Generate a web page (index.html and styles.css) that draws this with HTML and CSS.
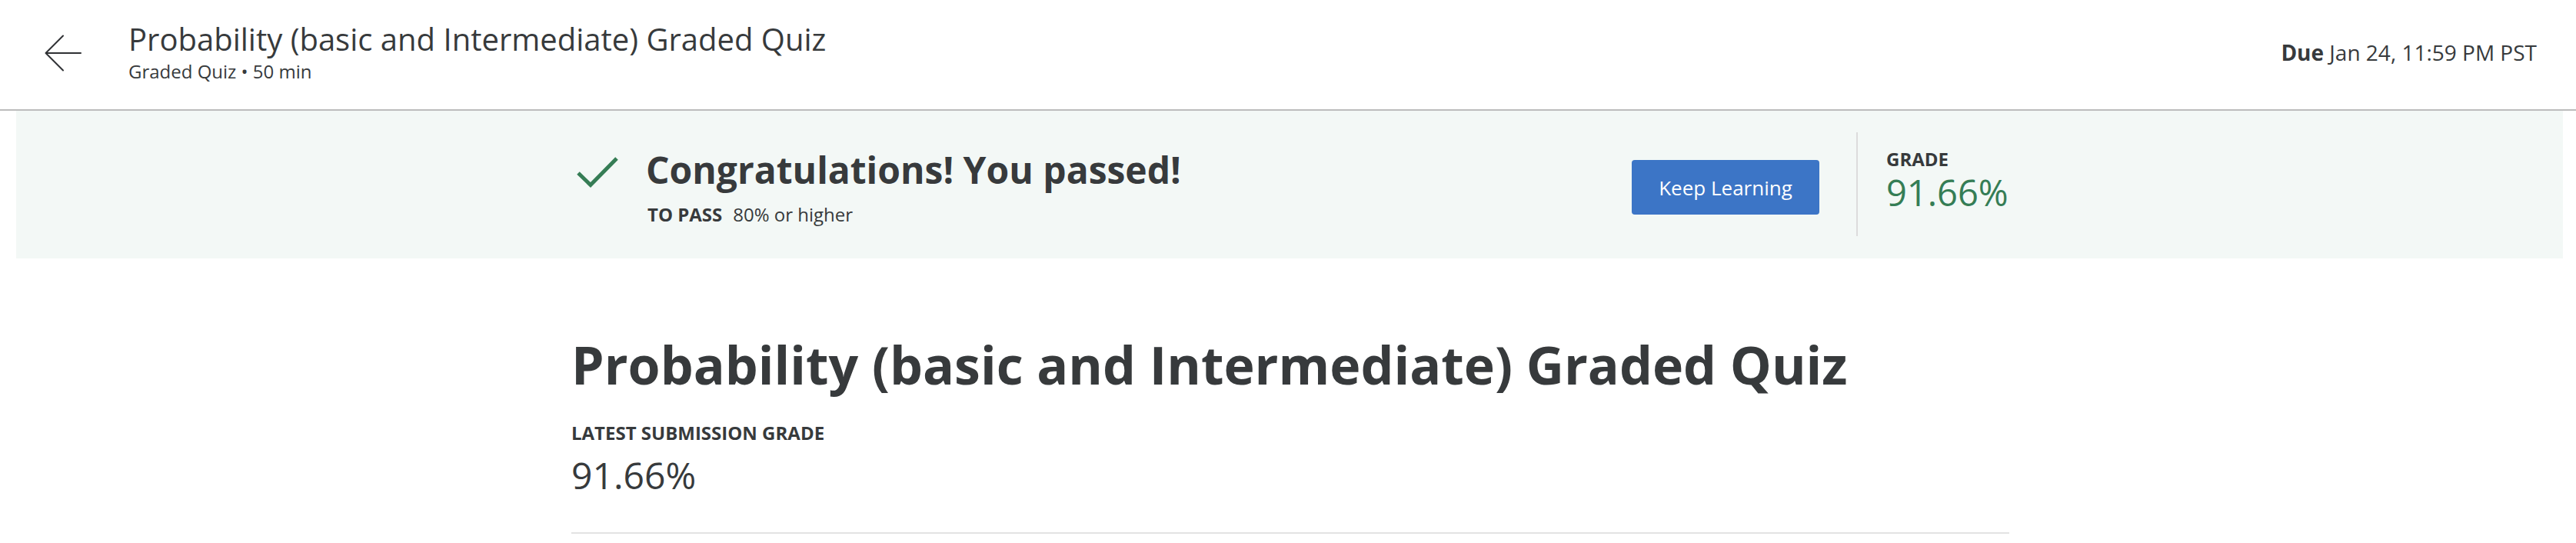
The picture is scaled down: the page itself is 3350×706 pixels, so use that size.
FILE: index.html
```html
<!DOCTYPE html>
<html lang="en">
<head>
<meta charset="utf-8">
<title>Probability (basic and Intermediate) Graded Quiz</title>
<link rel="stylesheet" href="styles.css">
</head>
<body>
<header class="topbar">
  <a class="back" href="#" aria-label="Back">
    <svg width="48" height="48" viewBox="0 0 48 48" fill="none" stroke="#2f3134" stroke-width="2" stroke-linecap="round" stroke-linejoin="round">
      <path d="M47 24 H2"/>
      <path d="M24 1.5 L1.5 24 L24 46.5"/>
    </svg>
  </a>
  <div class="titleblock">
    <div class="hdr-title">Probability (basic and Intermediate) Graded Quiz</div>
    <div class="hdr-sub">Graded Quiz • 50 min</div>
  </div>
  <div class="due"><b>Due</b> Jan 24, 11:59 PM PST</div>
</header>

<section class="banner">
  <div class="banner-inner">
    <svg class="check" width="56" height="44" viewBox="0 0 56 44" fill="none" stroke="#357d55" stroke-width="5">
      <polyline points="3,24 19,39.5 53,5"/>
    </svg>
    <div class="pass-text">
      <div class="congrats">Congratulations! You passed!</div>
      <div class="topass"><span class="lbl">TO PASS</span>80% or higher</div>
    </div>
    <button class="keep">Keep Learning</button>
    <div class="divider"></div>
    <div class="grade">
      <div class="grade-lbl">GRADE</div>
      <div class="grade-val">91.66%</div>
    </div>
  </div>
</section>

<main class="content">
  <h1 class="quiz-title">Probability (basic and Intermediate) Graded Quiz</h1>
  <div class="latest-lbl">LATEST SUBMISSION GRADE</div>
  <div class="latest-val">91.66%</div>
  <hr class="rule">
</main>
</body>
</html>
```

FILE: styles.css
```css
* { box-sizing: border-box; }
html, body { margin: 0; padding: 0; background: #fff; }
body {
  font-family: "Open Sans", "Liberation Sans", sans-serif;
  color: #373a3c;
}

.topbar {
  display: flex;
  align-items: center;
  height: 144px;
  padding: 0 51px 9px 58px;
  border-bottom: 2px solid #bcbcbc;
}
.back { display: flex; width: 48px; height: 48px; margin-top: 4px; }
.titleblock { margin-left: 61px; }
.hdr-title {
  font-size: 40px;
  line-height: 52px;
  font-weight: 400;
  color: #373a3c;
}
.hdr-sub {
  font-size: 24px;
  line-height: 32px;
  color: #373a3c;
}
.due {
  margin-left: auto;
  margin-top: 3px;
  font-size: 28px;
  line-height: 38px;
  color: #373a3c;
}
.due b { font-weight: 700; }

.banner {
  margin: 0 17px 0 21px;
  height: 192px;
  background: #f3f8f6;
}
.banner-inner {
  width: 1872px;
  margin: 0 auto;
  padding-left: 2px;
  display: flex;
  align-items: flex-start;
}
.check { margin: 57px 35px 0 6px; flex: none; }
.pass-text { margin-top: 47px; }
.congrats {
  font-size: 48px;
  line-height: 60px;
  font-weight: 700;
  color: #373a3c;
}
.topass {
  font-size: 24px;
  line-height: 32px;
  margin-top: 12px;
  margin-left: 2px;
}
.topass .lbl { font-weight: 700; margin-right: 14px; }

.keep {
  margin: 64px 0 0 auto;
  width: 244px;
  height: 71px;
  border: 0;
  border-radius: 4px;
  background: #3c75c6;
  color: #fff;
  font-family: "Open Sans", "Liberation Sans", sans-serif;
  font-size: 26px;
  font-weight: 400;
  padding: 0;
}
.divider {
  margin: 28px 37px 0 48px;
  width: 2px;
  height: 135px;
  background: #dcdcdc;
}
.grade { width: 160px; margin-top: 47px; }
.grade-lbl {
  font-size: 24px;
  line-height: 31px;
  font-weight: 700;
  color: #373a3c;
}
.grade-val {
  font-size: 47px;
  line-height: 56px;
  color: #357d55;
}

.content {
  width: 1876px;
  margin: 0 auto;
  padding-top: 95px;
  padding-left: 6px;
}
.quiz-title {
  margin: 0;
  font-size: 68px;
  line-height: 85px;
  font-weight: 700;
  color: #373a3c;
}
.latest-lbl {
  margin-top: 31px;
  font-size: 24px;
  line-height: 32px;
  font-weight: 700;
}
.latest-val {
  margin-top: 11px;
  font-size: 48px;
  line-height: 56px;
  font-weight: 400;
}
.rule {
  margin: 46px 0 0;
  border: 0;
  height: 2px;
  background: #e3e3e3;
}
```
